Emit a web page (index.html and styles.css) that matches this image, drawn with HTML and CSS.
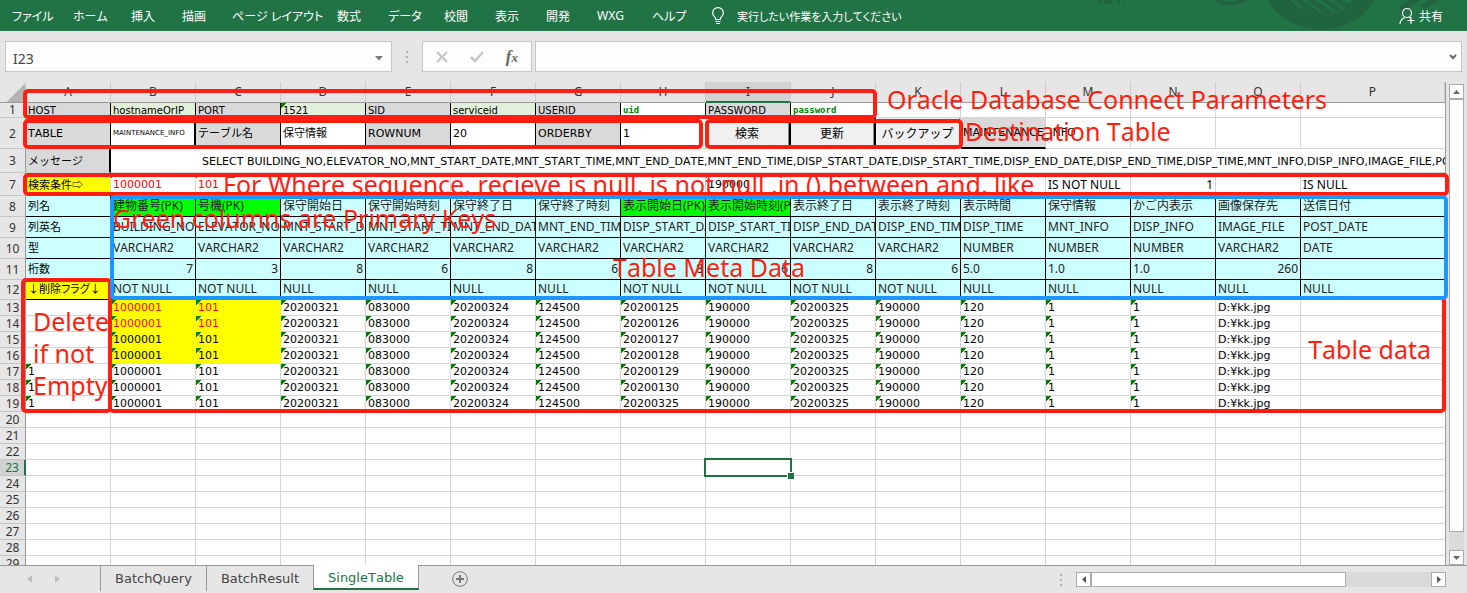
FILE: index.html
```
<!DOCTYPE html>
<html lang="ja">
<head>
<meta charset="utf-8">
<title>SingleTable</title>
<link rel="stylesheet" href="styles.css">
</head>
<body>
<header class="ribbon">
  <svg class="ribbon-art" viewBox="0 0 387 31" aria-hidden="true">
    <g fill="#22633f">
      <path d="M18 0h4v2h-4zM24 0h8v4h-14v-1h6zM38 0h2v3h-2zM43 0h2v2h-2z"/>
      <path d="M134 0a19 9 0 0 0 34 0h-9a10 6 0 0 1-16 0z"/>
      <path d="M188 0a58 50 0 0 0 106 0h-22l-2 4-8-4h-8l12 8-3 2-15-10h-8l18 12-4 1-19-13h-8l17 13-5-1-17-12h-8l12 9C219 9 213 4 211 0z"/>
      <path d="M330 0h10l-16 12-7-4zM349 0h9l-10 8-8-2z"/>
    </g>
  </svg>
  <nav class="ribbon-tabs">
    <a href="#">ファイル</a><a href="#">ホーム</a><a href="#">挿入</a><a href="#">描画</a><a href="#">ページ レイアウト</a><a href="#">数式</a><a href="#">データ</a><a href="#">校閲</a><a href="#">表示</a><a href="#">開発</a><a href="#">WXG</a><a href="#">ヘルプ</a>
  </nav>
  <a class="tell-me" href="#">
    <svg width="14" height="18" viewBox="0 0 14 18" fill="none" stroke="#fff" stroke-width="1.2"><path d="M4.500 12.500V11C3 9.500 1.600 8.300 1.600 6a5.400 5.400 0 0 1 10.800 0c0 2.300-1.400 3.500-2.900 5v1.500zM4.500 14.500h5M5 16.500h4"/></svg>
    実行したい作業を入力してください
  </a>
  <button class="share" type="button">
    <svg width="17" height="18" viewBox="0 0 17 18" fill="none" stroke="#fff" stroke-width="1.2"><circle cx="8" cy="6" r="4.500"/><path d="M1 17c.3-3.500 2-5.500 5-6.500M10 10l1.500 1M12 10v7M8.500 13.500h7"/></svg>
    共有
  </button>
</header>

<div class="formula-bar">
  <div class="name-box">
    <input type="text" value="I23" aria-label="名前ボックス">
    <svg width="8" height="5" viewBox="0 0 8 5"><path d="M0 0h8L4 4.500z" fill="#777"/></svg>
  </div>
  <div class="dots"><i></i><i></i><i></i></div>
  <div class="fx-box">
    <button type="button" aria-label="キャンセル"><svg width="12" height="12" viewBox="0 0 12 12"><path d="M1 1l10 10M11 1L1 11" stroke="#c4c4c4" stroke-width="2"/></svg></button>
    <button type="button" aria-label="入力"><svg width="14" height="12" viewBox="0 0 14 12"><path d="M1 6l4 4 8-9" fill="none" stroke="#c4c4c4" stroke-width="2.500"/></svg></button>
    <button type="button" class="fx" aria-label="関数の挿入">f<small>x</small></button>
  </div>
  <div class="formula">
    <input type="text" aria-label="数式バー">
    <svg width="8" height="6" viewBox="0 0 8 6"><path d="M1 1l3 3 3-3" fill="none" stroke="#666" stroke-width="2"/></svg>
  </div>
</div>

<main class="sheet">
  <div class="grid">
    <table>
      <colgroup id="cols"></colgroup>
      <thead><tr id="letters"></tr></thead>
      <tbody id="rows"></tbody>
    </table>
  </div>
  <div class="vscroll">
    <button type="button" aria-label="上へ"><svg width="7" height="4" viewBox="0 0 7 4"><path d="M0 4h7L3.500 0z" fill="#666"/></svg></button>
    <div class="vtrack"><div class="vthumb"></div></div>
    <button type="button" aria-label="下へ"><svg width="7" height="4" viewBox="0 0 7 4"><path d="M0 0h7L3.500 4z" fill="#666"/></svg></button>
  </div>

  <div class="mark m-connect"></div>
  <div class="mark m-table"></div>
  <div class="mark m-buttons"></div>
  <div class="mark m-data"></div>
  <div class="mark m-where"><span>For Where sequence, recieve is null, is not null ,in (),between and, like</span></div>
  <div class="mark m-delete"><span>Delete<br>if not<br>Empty</span></div>
  <div class="mark m-meta"></div>
  <p class="note n-connect">Oracle Database Connect Parameters</p>
  <p class="note n-dest">Destination Table</p>
  <p class="note n-green">Green columns are Primary Keys</p>
  <p class="note n-meta">Table Meta Data</p>
  <p class="note n-data">Table data</p>
</main>

<footer class="tab-bar">
  <button class="arrow" type="button" aria-label="前のシート"><svg width="5" height="8" viewBox="0 0 5 8"><path d="M5 0v8L0 4z" fill="#c0c0c0"/></svg></button>
  <button class="arrow" type="button" aria-label="次のシート"><svg width="5" height="8" viewBox="0 0 5 8"><path d="M0 0v8l5-4z" fill="#c0c0c0"/></svg></button>
  <nav class="tabs"><a href="#">BatchQuery</a><a href="#">BatchResult</a><a href="#" class="active">SingleTable</a></nav>
  <button class="add" type="button" aria-label="新しいシート"><svg width="16" height="16" viewBox="0 0 16 16" fill="none" stroke="#777"><circle cx="8" cy="8" r="7.300"/><path d="M8 4v8M4 8h8" stroke-width="2"/></svg></button>
  <div class="dots"><i></i><i></i><i></i></div>
  <div class="hscroll">
    <button type="button" aria-label="左へ"><svg width="4" height="7" viewBox="0 0 4 7"><path d="M4 0v7L0 3.500z" fill="#555"/></svg></button>
    <div class="htrack"><div class="hthumb"></div></div>
    <button type="button" aria-label="右へ"><svg width="4" height="7" viewBox="0 0 4 7"><path d="M0 0v7l4-3.500z" fill="#555"/></svg></button>
  </div>
</footer>
<script src="sheet.js"></script>
</body>
</html>
```
FILE: sheet.js
```
const letters = 'ABCDEFGHIJKLMNOP'.split('');
document.getElementById('cols').innerHTML =
  '<col class="c-num">' + letters.map((l, i) => i < 15 ? '<col class="c-std">' : '<col>').join('');
document.getElementById('letters').innerHTML =
  '<th class="corner"></th>' + letters.map(l => `<th scope="col"${l === 'I' ? ' class="current"' : ''}>${l}</th>`).join('');

const out = [];
const cell = (text = '', cls = '') => `<td class="${cls}">${text}</td>`;
function row(n, cls, cells) {
  while (cells.length < 16) cells.push(cell());
  out.push(`<tr class="${cls}"><th scope="row">${n}</th>${cells.join('')}</tr>`);
}

row(1, 'r1', [
  cell('HOST', 'label'), cell('hostnameOrIP', 'param'), cell('PORT', 'label'), cell('1521', 'param flag'),
  cell('SID', 'label'), cell('serviceid', 'param'), cell('USERID', 'label'), cell('uid', 'secret'),
  cell('PASSWORD', 'label'), cell('password', 'secret')
]);
row(2, 'r2', [
  cell('TABLE', 'label'), cell('MAINTENANCE_INFO', 'tiny thick'), cell('テーブル名', 'label'), cell('保守情報', 'edge'),
  cell('ROWNUM', 'label'), cell('20', 'edge flag'), cell('ORDERBY', 'label'), cell('1', 'flag'),
  cell('<button type="button">検索</button>', 'host thick'), cell('<button type="button">更新</button>', 'host thick'),
  cell('<button type="button">バックアップ</button>', 'host'), cell('MAINTENANCE_INFO', 'dest')
]);
const fields = ['BUILDING_NO', 'ELEVATOR_NO', 'MNT_START_DATE', 'MNT_START_TIME', 'MNT_END_DATE', 'MNT_END_TIME',
  'DISP_START_DATE', 'DISP_START_TIME', 'DISP_END_DATE', 'DISP_END_TIME', 'DISP_TIME', 'MNT_INFO', 'DISP_INFO',
  'IMAGE_FILE', 'POST_DATE'];
out.push(`<tr class="r3"><th scope="row">3</th><td class="label thick">メッセージ</td><td colspan="15" class="sql">SELECT ${fields.join(',')}</td></tr>`);
row(7, 'r7', [
  cell('検索条件⇨', 'key'), cell('1000001', 'red flag'), cell('101', 'red flag'), cell(), cell(), cell(), cell(), cell(),
  cell('190000', 'flag'), cell(), cell(), cell(), cell('IS NOT NULL', 'plain'), cell('1', 'plain num'), cell(), cell('IS NULL', 'plain')
]);

const names = ['建物番号(PK)', '号機(PK)', '保守開始日', '保守開始時刻', '保守終了日', '保守終了時刻', '表示開始日(PK)',
  '表示開始時刻(PK)', '表示終了日', '表示終了時刻', '表示時間', '保守情報', 'かご内表示', '画像保存先', '送信日付'];
const types = 'VARCHAR2 '.repeat(10).trim().split(' ').concat('NUMBER', 'NUMBER', 'NUMBER', 'VARCHAR2', 'DATE');
const sizes = ['7', '3', '8', '6', '8', '6', '8', '6', '8', '6', '5.0', '1.0', '1.0', '260', ''];
const required = [0, 1, 6, 7, 8, 9];
row(8, 'meta', [cell('列名'), ...names.map(t => cell(t, t.includes('PK') ? 'pk' : ''))]);
row(9, 'meta', [cell('列英名'), ...fields.map(t => cell(t))]);
row(10, 'meta', [cell('型'), ...types.map(t => cell(t))]);
row(11, 'meta', [cell('桁数'), ...sizes.map(t => cell(t, t.includes('.') ? '' : 'num'))]);
row(12, 'meta short', [cell('↓削除フラグ↓', 'key'), ...fields.map((f, i) => cell(required.includes(i) ? 'NOT NULL' : 'NULL'))]);

['20200125', '20200126', '20200127', '20200128', '20200129', '20200130', '20200325'].forEach((day, i) => {
  const key = 'flag' + (i < 4 ? ' hit' : '') + (i < 2 ? ' red' : '');
  row(13 + i, 'data', [
    i > 3 ? cell('1', 'flag') : cell(), cell('1000001', key), cell('101', key),
    ...['20200321', '083000', '20200324', '124500', day, '190000', '20200325', '190000', '120', '1', '1'].map(t => cell(t, 'flag')),
    cell('D:¥kk.jpg')
  ]);
});
for (let n = 20; n < 30; n++) {
  const cells = letters.map(l => n === 23 && l === 'I' ? cell('', 'selected') : cell());
  row(n, n === 23 ? 'data current' : 'data', cells);
}
document.getElementById('rows').innerHTML = out.join('');
```
FILE: styles.css
```
* { box-sizing: border-box; }
body {
  margin: 0;
  height: 100vh;
  display: flex;
  flex-direction: column;
  background: #e6e6e6;
  font-family: "DejaVu Sans", "Noto Sans CJK JP", sans-serif;
  font-size: 11px;
  font-kerning: none;
  color: #000;
  overflow: hidden;
}
button { font: inherit; color: inherit; padding: 0; border: 0; background: none; }
input { font: inherit; border: 0; outline: 0; background: none; min-width: 0; flex: 1; padding: 0; }
a { color: inherit; text-decoration: none; }
svg { display: block; flex: none; }

/* ribbon */
.ribbon {
  flex: none;
  height: 31px;
  display: flex;
  align-items: center;
  position: relative;
  padding: 0 24px 0 12px;
  background: #217346;
  color: #fff;
  font-family: "Noto Sans", "Noto Sans CJK JP", sans-serif;
  font-size: 12px;
  font-feature-settings: "palt";
  white-space: nowrap;
}
.ribbon-art { position: absolute; right: 0; top: 0; width: 387px; height: 31px; }
.ribbon-tabs {
  display: grid;
  grid-template-columns: 61px 58px 51px 50px 105px 51px 56px 51px 51px 51px 55px 59px;
}
.tell-me { display: flex; align-items: center; gap: 12px; font-size: 11px; }
.share { position: relative; margin-left: auto; display: flex; align-items: center; gap: 3px; }

/* formula bar */
.formula-bar { flex: none; display: flex; align-items: center; padding: 10px 5px; height: 51px; }
.name-box, .fx-box, .formula {
  display: flex;
  align-items: center;
  height: 31px;
  border: 1px solid #c6c6c6;
  background: #fdfdfd;
}
.name-box {
  flex: 0 0 387px;
  padding: 3px 8px 0 7px;
  font: 14px "Noto Sans", sans-serif;
}
.name-box input { color: #444; }
.fx-box { flex: 0 0 110px; justify-content: space-around; padding: 0 2px; }
.fx { color: #666; font: italic bold 17px "Liberation Serif", serif; }
.fx small { font-size: 13px; }
.formula { flex: 1; margin-left: 3px; padding: 0 4px; }
.dots { width: 30px; display: grid; gap: 3px; justify-content: center; }
.dots i { width: 2px; height: 2px; background: #b0b0b0; }

/* sheet */
.sheet { flex: 1; min-height: 0; display: flex; position: relative; }
.grid { flex: 1; min-width: 0; overflow: hidden; border-right: 1px solid #999; }
table { width: 100%; table-layout: fixed; border-collapse: separate; border-spacing: 0; background: #fff; }
.c-num { width: 26px; }
.c-std { width: 85px; }
th {
  padding: 0;
  background: #e6e6e6;
  font: 12px/15px "Noto Sans", sans-serif;
  color: #333;
}
thead th { height: 21px; line-height: 16px; border-right: 1px solid #ccc; border-bottom: 1px solid #999; }
thead .current { background: #d2d2d2; border-bottom: 2px solid #217346; }
thead .corner { background: linear-gradient(135deg, #e6e6e6 60%, #b4b4b4 60%); }
tbody th { border-right: 1px solid #999; border-bottom: 1px solid #c6c6c6; }
td {
  padding: 0 2px;
  line-height: 15px;
  border-right: 1px solid #d4d4d4;
  border-bottom: 1px solid #d4d4d4;
  white-space: nowrap;
  overflow: hidden;
}
td:last-child { border-right: 0; }
.flag { background-image: linear-gradient(135deg, #008000 4px, transparent 4px); }
.num { text-align: right; }
.red { color: #f00; }
.label { background-color: #d9d9d9; border-right-color: #000; }
.r1 { height: 15px; font-size: 10px; }
.r1 th { line-height: 14px; }
.r1 td { padding-top: 1px; line-height: 13px; }
.r1 .param { background-color: #e2efda; border-right-color: #000; }
.r1 .secret { color: #008000; font: bold 9px/13px "DejaVu Sans Mono", monospace; border-right-color: #000; }
.r2 { height: 31px; }
.r2 td { line-height: 29px; }
.r2 .tiny { font-size: 7px; }
.r2 .edge { border-right-color: #000; }
.r2 .thick, .r3 .thick { border-right: 2px solid #000; }
.r2 .host { padding: 0; }
.host button {
  display: block;
  width: 100%;
  height: 30px;
  padding-bottom: 2px;
  background: #f0f0f0;
  border-right: 1px solid #888;
  border-bottom: 2px solid #888;
  font-family: "Noto Sans CJK JP", sans-serif;
  font-size: 12px;
}
.r2 .dest { background: #d9d9d9; overflow: visible; border-bottom: 2px solid #000; }
.r3 { height: 24px; }
.r3 td { padding-top: 2px; }
.r3 .sql { padding-left: 91px; }
.r7 { height: 23px; }
.r7 .key, .meta .key { background: #ff0; }
.r7 .plain { font-family: "Noto Sans", sans-serif; font-size: 12px; }
.meta { height: 21px; }
.meta.short { height: 20px; }
.meta td {
  padding-bottom: 2px;
  background: #cff;
  border-color: #000;
  font-family: "Noto Sans", "Noto Sans CJK JP", sans-serif;
  font-size: 12px;
  color: #222;
}
.meta td:first-of-type, .r7 .key { font-family: "Noto Sans CJK JP", sans-serif; font-size: 11px; color: #000; }
.meta.short .key { font-feature-settings: "palt"; }
.meta .pk { background: #0f0; }
.data { height: 16px; }
.data td { padding-top: 1px; line-height: 14px; }
.data .hit { background-color: #ff0; border-color: #ff0; }
.data.current th { background: #d2d2d2; color: #217346; border-right: 2px solid #217346; }
.selected { position: relative; overflow: visible; }
.selected::before { content: ""; position: absolute; inset: -2px -2px -2px -2px; border: 2px solid #217346; }
.selected::after {
  content: "";
  position: absolute;
  right: -4px;
  bottom: -4px;
  width: 6px;
  height: 6px;
  background: #217346;
  border: solid #fff;
  border-width: 1px 0 0 1px;
}

/* scroll bars */
.vscroll { flex: none; width: 21px; padding: 2px 3px 0; display: flex; flex-direction: column; }
.vscroll button, .hscroll button {
  flex: none;
  width: 15px;
  height: 15px;
  display: grid;
  place-items: center;
  background: #fff;
  border: 1px solid #ababab;
}
.vtrack { flex: 1; background: #dadada; }
.vthumb { height: 96%; background: #fff; border: 1px solid #ababab; }

/* annotations */
.mark { position: absolute; border: 4px solid #ff1e10; border-radius: 5px; }
.note, .mark span {
  margin: 0;
  color: #ff1e10;
  font-family: "Noto Sans", sans-serif;
  font-size: 25px;
  line-height: 32px;
  white-space: nowrap;
}
.note { position: absolute; }
.m-connect { left: 23px; top: 7px; width: 854px; height: 30px; }
.m-table { left: 23px; top: 37px; width: 680px; height: 30px; }
.m-buttons { left: 705px; top: 37px; width: 258px; height: 30px; }
.m-where { left: 23px; right: 18px; top: 91px; height: 23px; display: flex; align-items: center; overflow: hidden; padding: 0 0 2px 196px; }
.m-meta { left: 110px; right: 19px; top: 113px; height: 105px; border-color: #1e96ff; }
.m-delete { left: 21px; top: 196px; width: 91px; height: 135px; padding: 23px 0 0 8px; overflow: hidden; }
.m-delete span { display: block; }
.m-data { left: 108px; right: 21px; top: 214px; height: 117px; }
.n-connect { left: 887px; top: 1px; }
.n-dest { left: 965px; top: 33px; }
.n-green { left: 113px; top: 120px; }
.n-meta { left: 613px; top: 169px; }
.n-data { right: 36px; top: 251px; }

/* sheet tabs */
.tab-bar {
  flex: none;
  height: 28px;
  display: flex;
  align-items: flex-start;
  border-top: 1px solid #999;
  padding: 0 21px 0 15px;
}
.arrow { width: 28px; height: 26px; display: grid; place-items: center; }
.tabs {
  display: flex;
  margin-left: 29px;
  font-size: 13px;
  color: #444;
}
.tabs a { height: 25px; line-height: 25px; padding: 0 14px; border-left: 1px solid #999; }
.tabs .active {
  margin-top: -1px;
  background: #fff;
  color: #217346;
  border-right: 1px solid #999;
  border-bottom: 2px solid #217346;
}
.add { margin: 5px auto 0 33px; }
.tab-bar .dots { padding-top: 8px; }
.hscroll { flex: 0 0 370px; display: flex; margin-top: 6px; }
.htrack { flex: 1; background: #dadada; }
.hthumb { width: 75%; height: 15px; background: #fff; border: 1px solid #ababab; }
```
